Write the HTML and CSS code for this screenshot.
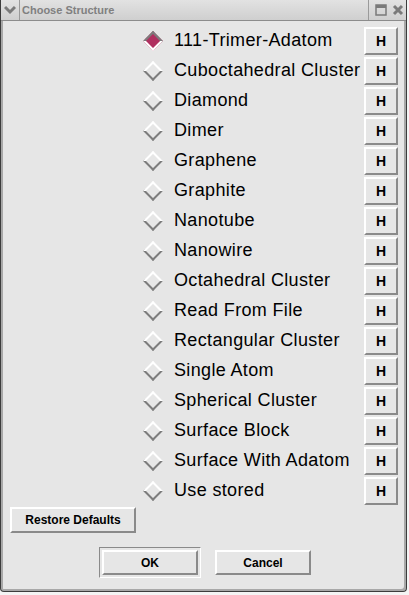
FILE: index.html
```html
<!DOCTYPE html>
<html lang="en">
<head>
<meta charset="UTF-8">
<meta name="viewport" content="width=device-width, initial-scale=1.0">
<title>Choose Structure</title>
<link rel="stylesheet" href="styles.css">
</head>
<body>

<div class="window">
  <div class="titlebar">
    <span class="tb-btn">
      <svg width="12" height="10" viewBox="0 0 12 10"><path d="M1 2 L6 7 L11 2" fill="none" stroke="#7a7a7a" stroke-width="3"/></svg>
    </span>
    <span class="title">Choose Structure</span>
    <span class="tb-right">
      <svg width="12" height="12" viewBox="0 0 12 12"><rect x="1" y="1" width="10" height="10" fill="none" stroke="#7a7a7a" stroke-width="1.5"/><rect x="1" y="1" width="10" height="3" fill="#7a7a7a"/></svg>
      <svg width="12" height="12" viewBox="0 0 12 12"><path d="M2 2 L10 10 M10 2 L2 10" stroke="#7a7a7a" stroke-width="3"/></svg>
    </span>
  </div>

  <div class="content">
    <div class="choices">
      <div class="row"><span class="radio checked"></span><span class="label">111-Trimer-Adatom</span><button class="help">H</button></div>
      <div class="row"><span class="radio"></span><span class="label">Cuboctahedral Cluster</span><button class="help">H</button></div>
      <div class="row"><span class="radio"></span><span class="label">Diamond</span><button class="help">H</button></div>
      <div class="row"><span class="radio"></span><span class="label">Dimer</span><button class="help">H</button></div>
      <div class="row"><span class="radio"></span><span class="label">Graphene</span><button class="help">H</button></div>
      <div class="row"><span class="radio"></span><span class="label">Graphite</span><button class="help">H</button></div>
      <div class="row"><span class="radio"></span><span class="label">Nanotube</span><button class="help">H</button></div>
      <div class="row"><span class="radio"></span><span class="label">Nanowire</span><button class="help">H</button></div>
      <div class="row"><span class="radio"></span><span class="label">Octahedral Cluster</span><button class="help">H</button></div>
      <div class="row"><span class="radio"></span><span class="label">Read From File</span><button class="help">H</button></div>
      <div class="row"><span class="radio"></span><span class="label">Rectangular Cluster</span><button class="help">H</button></div>
      <div class="row"><span class="radio"></span><span class="label">Single Atom</span><button class="help">H</button></div>
      <div class="row"><span class="radio"></span><span class="label">Spherical Cluster</span><button class="help">H</button></div>
      <div class="row"><span class="radio"></span><span class="label">Surface Block</span><button class="help">H</button></div>
      <div class="row"><span class="radio"></span><span class="label">Surface With Adatom</span><button class="help">H</button></div>
      <div class="row"><span class="radio"></span><span class="label">Use stored</span><button class="help">H</button></div>
    </div>

    <button class="btn restore">Restore Defaults</button>

    <div class="actions">
      <span class="default-frame"><button class="btn action">OK</button></span>
      <button class="btn action">Cancel</button>
    </div>
  </div>
</div>

</body>
</html>
```

FILE: styles.css
```css
body {
  margin: 0;
  font-family: "Liberation Sans", Arial, sans-serif;
  background-color: #f4f4f4;
}

.window {
  width: 407px;
  height: 592px;
  box-sizing: border-box;
  border: 1px solid #3c3c3c;
  border-top: none;
  border-radius: 0 0 4px 4px;
  box-shadow: inset 2px 0 0 #a8a8a8, inset -2px -2px 0 #a8a8a8;
  background-color: #e6e6e6;
  display: flex;
  flex-direction: column;
}

.titlebar {
  height: 20px;
  display: flex;
  align-items: center;
  background: linear-gradient(#e2e2e2, #cfcfcf);
  border-bottom: 1px solid #8c8c8c;
}

.tb-btn {
  width: 18px;
  height: 20px;
  display: flex;
  align-items: center;
  justify-content: center;
  border-right: 1px solid #9a9a9a;
}

.title {
  margin-left: 2px;
  font-size: 11px;
  font-weight: bold;
  color: #808080;
}

.tb-right {
  margin-left: auto;
  height: 20px;
  display: flex;
  align-items: center;
  gap: 5px;
  padding: 0 2px 0 6px;
  border-left: 1px solid #9a9a9a;
}

.content {
  flex: 1;
  padding-top: 5px;
}

.row {
  height: 30px;
  display: flex;
  align-items: center;
}

.radio {
  width: 14px;
  height: 14px;
  box-sizing: border-box;
  margin-left: 145px;
  transform: rotate(45deg);
  border: 2px solid;
  border-color: #fff #7c7c7c #7c7c7c #fff;
}

.radio.checked {
  background-color: #b03060;
  border-color: #7c7c7c #fff #fff #7c7c7c;
}

.label {
  margin-left: 14px;
  margin-top: -2px;
  font-size: 18px;
  letter-spacing: 0.35px;
  color: #000;
}

button {
  font-family: "Liberation Sans", Arial, sans-serif;
  background-color: #e6e6e6;
  border: 2px solid;
  border-color: #fff #8a8a8a #8a8a8a #fff;
  color: #000;
  padding: 0;
  cursor: pointer;
}

.help {
  margin-left: auto;
  margin-right: 8px;
  width: 34px;
  height: 28px;
  font-size: 14px;
  font-weight: bold;
}

.btn {
  font-size: 12px;
  font-weight: bold;
}

.restore {
  display: block;
  margin: 1px 0 0 9px;
  width: 126px;
  height: 26px;
}

.actions {
  margin-top: 14px;
  padding-left: 98px;
  display: flex;
  align-items: center;
  gap: 14px;
}

.default-frame {
  display: flex;
  padding: 2px;
  border: 1px solid;
  border-color: #8a8a8a #fff #fff #8a8a8a;
}

.action {
  width: 96px;
  height: 25px;
}
```
